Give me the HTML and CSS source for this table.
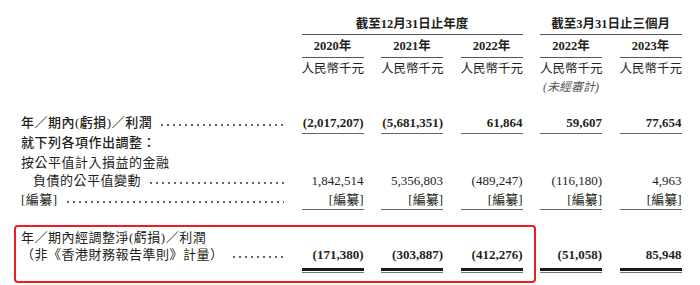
FILE: index.html
```html
<!DOCTYPE html>
<html lang="zh-Hant">
<head>
  <meta charset="UTF-8">
  <meta name="viewport" content="width=device-width, initial-scale=1.0">
  <title>非香港財務報告準則計量</title>
  <link rel="stylesheet" href="styles.css">
</head>
<body>
  <div class="sheet">
    <div class="row group">
      <div></div>
      <div class="span3 rule">截至12月31日止年度</div>
      <div class="span2 rule">截至3月31日止三個月</div>
    </div>
    <div class="row years">
      <div></div>
      <div class="rule">2020年</div>
      <div class="rule">2021年</div>
      <div class="rule">2022年</div>
      <div class="rule">2022年</div>
      <div class="rule">2023年</div>
    </div>
    <div class="row units">
      <div></div>
      <div>人民幣千元</div>
      <div>人民幣千元</div>
      <div>人民幣千元</div>
      <div>人民幣千元</div>
      <div>人民幣千元</div>
    </div>
    <div class="row note">
      <div></div>
      <div></div>
      <div></div>
      <div></div>
      <div>(未經審計)</div>
      <div></div>
    </div>

    <div class="row r1 strong">
      <div class="label"><span>年／期內(虧損)／利潤</span><span class="lead"></span></div>
      <div class="num rule">(2,017,207)</div>
      <div class="num rule">(5,681,351)</div>
      <div class="num rule">61,864</div>
      <div class="num rule">59,607</div>
      <div class="num rule">77,654</div>
    </div>
    <div class="row r2">
      <div class="label medium">就下列各項作出調整：</div>
    </div>
    <div class="row r3">
      <div class="label">按公平值計入損益的金融</div>
    </div>
    <div class="row r4">
      <div class="label indent"><span>負債的公平值變動</span><span class="lead"></span></div>
      <div class="num">1,842,514</div>
      <div class="num">5,356,803</div>
      <div class="num">(489,247)</div>
      <div class="num">(116,180)</div>
      <div class="num">4,963</div>
    </div>
    <div class="row r5">
      <div class="label"><span>[編纂]</span><span class="lead"></span></div>
      <div class="num rule">[編纂]</div>
      <div class="num rule">[編纂]</div>
      <div class="num rule">[編纂]</div>
      <div class="num rule">[編纂]</div>
      <div class="num rule">[編纂]</div>
    </div>

    <div class="row r6">
      <div class="label">年／期內經調整淨(虧損)／利潤</div>
    </div>
    <div class="row r7 strong">
      <div class="label"><span>（非《香港財務報告準則》計量）</span><span class="lead"></span></div>
      <div class="num total">(171,380)</div>
      <div class="num total">(303,887)</div>
      <div class="num total">(412,276)</div>
      <div class="num total">(51,058)</div>
      <div class="num total">85,948</div>
    </div>

    <div class="highlight"></div>
  </div>
</body>
</html>
```

FILE: styles.css
```css
* {
  margin: 0;
  padding: 0;
  box-sizing: border-box;
}
body {
  background: #fff;
  color: #231f20;
  font-family: "Liberation Serif", "Noto Sans CJK TC", serif;
  font-size: 13px;
}
.sheet {
  position: relative;
  width: 700px;
  height: 285px;
  padding-left: 21px;
}
.row {
  display: grid;
  grid-template-columns: 263px repeat(5, 62px);
  column-gap: 17.5px;
  line-height: 18px;
}
.row > div {
  white-space: nowrap;
}

/* header */
.group {
  padding-top: 15px;
  font-size: 12.5px;
  font-weight: bold;
  text-align: center;
}
.span3 {
  grid-column: 2 / span 3;
}
.span2 {
  grid-column: 5 / span 2;
}
.group .rule {
  padding-bottom: 1px;
  border-bottom: 1px solid #555;
}
.years {
  padding-top: 2px;
  font-size: 12.5px;
  font-weight: bold;
  text-align: center;
}
.years .rule {
  padding-bottom: 2px;
  border-bottom: 1px solid #555;
}
.units {
  padding-top: 2px;
  font-size: 12.5px;
  text-align: center;
}
.note {
  font-size: 12px;
  font-style: italic;
  color: #555;
  text-align: center;
}

/* body rows */
.label {
  display: flex;
  overflow: hidden;
  letter-spacing: 0.5px;
}
.label.indent {
  padding-left: 12px;
}
.medium {
  font-weight: 500;
}
.lead {
  flex: 1;
  margin-left: 7px;
  background: radial-gradient(circle, #666 0.8px, transparent 1.2px) 0 9px / 6px 4px repeat-x;
}
.num {
  text-align: right;
}
.strong .num {
  font-weight: bold;
}
.strong .label span:first-child {
  font-weight: 500;
}
.r7 .label span:first-child {
  font-weight: normal;
}
.r1 {
  margin-top: 18px;
}
.r1 .rule {
  padding-bottom: 1px;
  border-bottom: 1px solid #666;
}
.r3 {
  margin-top: 2px;
}
.r5 {
  margin-top: 1px;
}
.r5 .rule {
  border-bottom: 1px solid #666;
}
.r6 {
  margin-top: 19px;
  line-height: 17px;
}
.total {
  padding-bottom: 4px;
  border-bottom: 3px solid #1a1a1a;
  box-shadow: 0 1px 0 #fff, 0 2px 0 #777;
}

/* annotation box */
.highlight {
  position: absolute;
  left: 14px;
  top: 225px;
  width: 522px;
  height: 58px;
  border: 2px solid #ee1c24;
  border-radius: 4px;
}
```
